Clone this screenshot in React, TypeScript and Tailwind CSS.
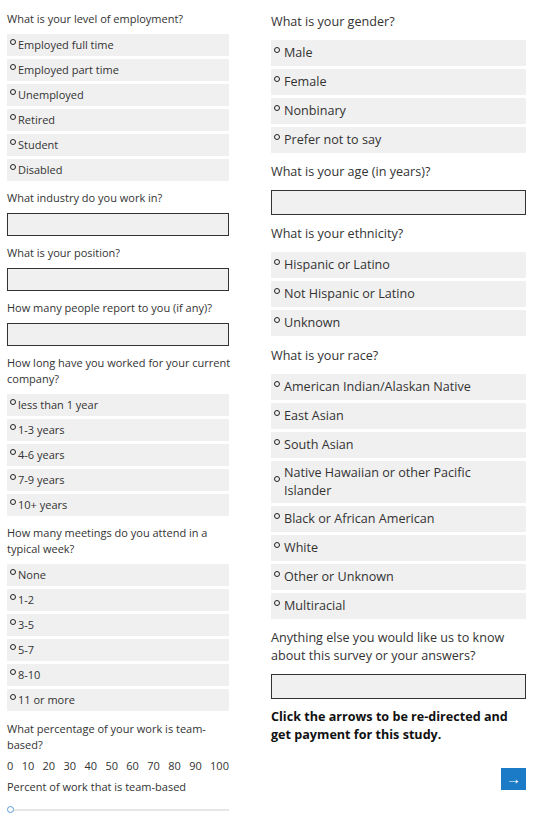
const employment = ["Employed full time", "Employed part time", "Unemployed", "Retired", "Student", "Disabled"];
const tenure = ["less than 1 year", "1-3 years", "4-6 years", "7-9 years", "10+ years"];
const meetings = ["None", "1-2", "3-5", "5-7", "8-10", "11 or more"];
const genders = ["Male", "Female", "Nonbinary", "Prefer not to say"];
const ethnicities = ["Hispanic or Latino", "Not Hispanic or Latino", "Unknown"];
const races = [
  "American Indian/Alaskan Native",
  "East Asian",
  "South Asian",
  "Native Hawaiian or other Pacific Islander",
  "Black or African American",
  "White",
  "Other or Unknown",
  "Multiracial",
];
const scale = [0, 10, 20, 30, 40, 50, 60, 70, 80, 90, 100];

function SmallOptions({ items }: { items: string[] }) {
  return (
    <div className="flex flex-col gap-[3px]">
      {items.map((t) => (
        <div key={t} className="flex items-center h-[22px] bg-[#f0f0f0] pl-[3px]">
          <span className="w-[6px] h-[6px] rounded-full border-[1.5px] border-[#222] mb-[7px] mr-[2px] shrink-0" />
          <span>{t}</span>
        </div>
      ))}
    </div>
  );
}

function BigOptions({ items }: { items: string[] }) {
  return (
    <div className="flex flex-col gap-[3px]">
      {items.map((t) => (
        <div key={t} className="flex items-center min-h-[26px] py-[3px] bg-[#f0f0f0] pl-[3px] pr-[40px]">
          <span className="w-[6px] h-[6px] rounded-full border-[1.5px] border-[#222] mb-[7px] mr-[4px] shrink-0" />
          <span className="leading-[18px]">{t}</span>
        </div>
      ))}
    </div>
  );
}

function SmallQ({ children }: { children: React.ReactNode }) {
  return <p className="mt-[9px] mb-[7px]">{children}</p>;
}

function BigQ({ children }: { children: React.ReactNode }) {
  return <p className="mt-[10px] mb-[9px] pr-[10px]">{children}</p>;
}

export default function App() {
  return (
    <div
      className="flex bg-white text-[#333] min-h-[831px]"
      style={{ fontFamily: '"Open Sans", "Liberation Sans", sans-serif' }}
    >
      <div className="w-[222px] ml-[7px] text-[11px] leading-[16px] pt-[2px]">
        <SmallQ>What is your level of employment?</SmallQ>
        <SmallOptions items={employment} />

        <SmallQ>What industry do you work in?</SmallQ>
        <div className="h-[23px] border-[1.5px] border-[#333] bg-[#f0f0f0]" />

        <SmallQ>What is your position?</SmallQ>
        <div className="h-[23px] border-[1.5px] border-[#333] bg-[#f0f0f0]" />

        <SmallQ>How many people report to you (if any)?</SmallQ>
        <div className="h-[23px] border-[1.5px] border-[#333] bg-[#f0f0f0]" />

        <SmallQ>
          <span className="whitespace-nowrap">How long have you worked for your current</span>
          <br />
          company?
        </SmallQ>
        <SmallOptions items={tenure} />

        <SmallQ>How many meetings do you attend in a typical week?</SmallQ>
        <SmallOptions items={meetings} />

        <p className="mt-[10px] mb-[5px] pr-[10px]">What percentage of your work is team-based?</p>
        <div className="flex justify-between">
          {scale.map((n) => (
            <span key={n}>{n}</span>
          ))}
        </div>
        <p className="mt-[5px]">Percent of work that is team-based</p>
        <div className="flex items-center mt-[11px]">
          <span className="w-[7px] h-[7px] rounded-full border border-[#5a9bd8] bg-white shrink-0" />
          <div className="flex-1 h-[2px] bg-[#e6e6e6]" />
        </div>
      </div>

      <div className="w-[255px] ml-[42px] text-[12.6px] leading-[18px] pt-[3px]">
        <BigQ>What is your gender?</BigQ>
        <BigOptions items={genders} />

        <BigQ>What is your age (in years)?</BigQ>
        <div className="h-[25px] border-[1.5px] border-[#333] bg-[#f0f0f0]" />

        <BigQ>What is your ethnicity?</BigQ>
        <BigOptions items={ethnicities} />

        <p className="mt-[11px] mb-[9px]">What is your race?</p>
        <BigOptions items={races} />

        <BigQ>Anything else you would like us to know about this survey or your answers?</BigQ>
        <div className="h-[25px] border-[1.5px] border-[#333] bg-[#f0f0f0]" />

        <p className="mt-[9px] font-bold text-[#111] pr-[4px]">
          Click the arrows to be re-directed and get payment for this study.
        </p>
        <div className="flex justify-end mt-[24px]">
          <button className="w-[25px] h-[22px] bg-[#1b7bc6] text-white text-[15px] leading-none flex items-center justify-center pb-[2px]">
            →
          </button>
        </div>
      </div>
    </div>
  );
}
